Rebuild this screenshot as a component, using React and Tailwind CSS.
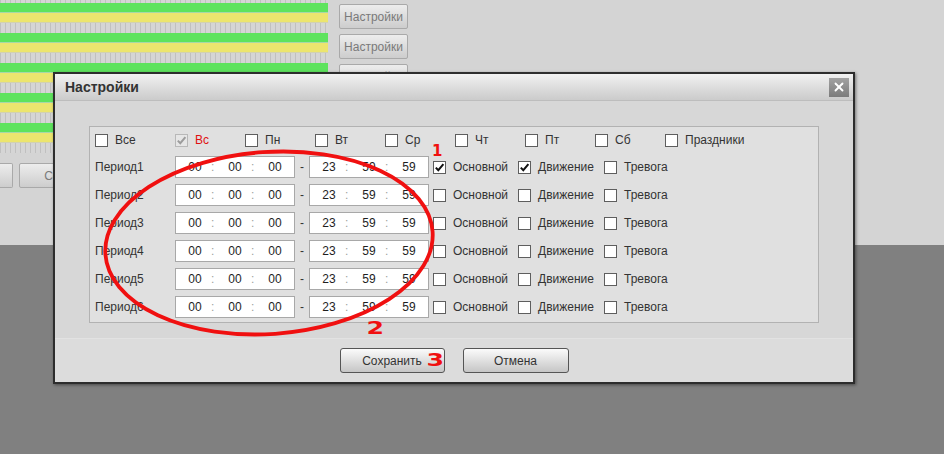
import React from 'react';
import clsx from 'clsx';
import { X } from 'lucide-react';

const days = ['Все', 'Вс', 'Пн', 'Вт', 'Ср', 'Чт', 'Пт', 'Сб', 'Праздники'];
const periods = [1, 2, 3, 4, 5, 6];

function Box({ checked, disabled }) {
  return (
    <span
      className={clsx(
        'flex h-[13px] w-[13px] shrink-0 items-center justify-center border',
        disabled ? 'border-[#b8b8b8] bg-[#e6e6e6] text-[#9c9c9c]' : 'border-[#5e5e5e] bg-white text-[#111]'
      )}
    >
      {checked && (
        <svg width="11" height="11" viewBox="0 0 11 11" fill="none">
          <path d="M1.8 5.6 4.3 8.2 9.4 2.2" stroke="currentColor" strokeWidth="2" />
        </svg>
      )}
    </span>
  );
}

function TimeBox({ parts }) {
  return (
    <div className="flex h-[22px] w-[120px] items-center border border-[#a8a8a8] bg-white pl-[4px] text-[#1e1e1e]">
      {parts.map((p, i) => (
        <React.Fragment key={i}>
          <span className="w-[30px] text-center">{p}</span>
          {i < 2 && <span className="w-[10px] pl-[1px] text-[#a0a0a0]">:</span>}
        </React.Fragment>
      ))}
    </div>
  );
}

function Schedule() {
  return (
    <div className="flex flex-col">
      <div className="h-[3px] w-[328px] bg-[repeating-linear-gradient(90deg,#c0c0c0_0px,#c0c0c0_1px,#d5d5d5_1px,#d5d5d5_5px)]" />
      {[0, 1, 2, 3, 4].map((i) => (
        <div key={i} className="flex h-[30px]">
          <div className="flex w-[328px] flex-col">
            <div className="h-[10px] border-b border-[#a8d8a8] bg-[#5ee35e]" />
            <div className="h-[10px] border-b border-[#d2d2b0] bg-[#ece56e]" />
            <div className="h-[10px] bg-[repeating-linear-gradient(90deg,#c0c0c0_0px,#c0c0c0_1px,#d5d5d5_1px,#d5d5d5_5px)]" />
          </div>
          <div className="ml-[11px] pt-[1px]">
            <button className="h-[25px] w-[69px] rounded-[2px] border border-[#a9a9a9] bg-gradient-to-b from-[#ededed] to-[#cdcdcd] text-[12px] text-[#7a7a7a]">
              Настройки
            </button>
          </div>
        </div>
      ))}
      <div className="mt-[10px] flex gap-[6px]">
        <div className="h-[25px] w-[13px] rounded-r-[2px] border-y border-r border-[#a9a9a9] bg-gradient-to-b from-[#ededed] to-[#cdcdcd]" />
        <button className="h-[25px] w-[110px] rounded-[2px] border border-[#a9a9a9] bg-gradient-to-b from-[#ededed] to-[#cdcdcd] text-[12px] text-[#7a7a7a]">
          Сохранить
        </button>
      </div>
    </div>
  );
}

function Dialog() {
  return (
    <div className="absolute left-[53px] top-[72px] flex h-[312px] w-[802px] flex-col border-2 border-[#2d2d2d] bg-[#d7d7d7] shadow-[1px_1px_3px_rgba(0,0,0,0.45)]">
      <div className="flex h-[27px] items-center justify-between border-b border-[#bdbdbd] bg-gradient-to-b from-[#f1f1f1] to-[#cbcbcb] pl-[10px] pr-[4px]">
        <span className="text-[14px] font-bold text-[#333]">Настройки</span>
        <button className="flex h-[19px] w-[20px] items-center justify-center bg-gradient-to-b from-[#a2a2a2] to-[#7c7c7c] text-white">
          <X size={14} strokeWidth={3.2} />
        </button>
      </div>

      <div className="h-[237px] pl-[34px] pt-[25px]">
        <div className="flex w-[730px] flex-col border border-[#b2b2b2] bg-[#e0e0e0] pb-[1px] pl-[5px] text-[#333]">
          <div className="flex h-[26px] items-center">
            {days.map((d, i) => (
              <div key={d} className={clsx('flex items-center gap-[7px]', i === 0 ? 'w-[80px]' : 'w-[70px]')}>
                <Box checked={i === 1} disabled={i === 1} />
                <span className={clsx(i === 1 && 'text-[#e01010]')}>{d}</span>
              </div>
            ))}
          </div>
          {periods.map((n) => (
            <div key={n} className="flex h-[28px] items-center">
              <span className="w-[80px]">Период{n}</span>
              <TimeBox parts={['00', '00', '00']} />
              <span className="w-[14px] text-center">-</span>
              <TimeBox parts={['23', '59', '59']} />
              <div className="ml-[4px] flex w-[85px] items-center gap-[7px]">
                <Box checked={n === 1} />
                <span>Основной</span>
              </div>
              <div className="flex w-[86px] items-center gap-[7px]">
                <Box checked={n === 1} />
                <span>Движение</span>
              </div>
              <div className="flex items-center gap-[7px]">
                <Box />
                <span>Тревога</span>
              </div>
            </div>
          ))}
        </div>
      </div>

      <div className="flex h-[44px] items-center justify-center gap-[18px] border-t border-[#e2e2e2] bg-[#dcdcdc]">
        <button className="h-[25px] w-[105px] rounded-[3px] border border-[#555] bg-gradient-to-b from-[#fbfbfb] to-[#c6c6c6] text-[12px] text-[#333]">
          Сохранить
        </button>
        <button className="h-[25px] w-[106px] rounded-[3px] border border-[#555] bg-gradient-to-b from-[#fbfbfb] to-[#c6c6c6] text-[12px] text-[#333]">
          Отмена
        </button>
      </div>
    </div>
  );
}

// hand-drawn red markup on top of the dialog
function Marks() {
  return (
    <>
      <svg className="pointer-events-none absolute left-0 top-0" width="944" height="454">
        <ellipse cx="269" cy="243" rx="164" ry="91" transform="rotate(-4 269 243)" fill="none" stroke="#f01010" strokeWidth="3.8" />
      </svg>
      <span className="absolute left-[432px] top-[144px] font-['DejaVu_Sans',sans-serif] text-[15px] font-bold leading-none text-[#f01010]">1</span>
      <span className="absolute left-[369px] top-[319px] scale-x-140 font-['DejaVu_Sans',sans-serif] text-[18px] font-bold leading-none text-[#f01010]">2</span>
      <span className="absolute left-[429px] top-[351px] scale-x-140 font-['DejaVu_Sans',sans-serif] text-[18px] font-bold leading-none text-[#f01010]">3</span>
    </>
  );
}

export default function App() {
  return (
    <div className="relative h-[454px] w-[944px] overflow-hidden bg-[#808080] font-['Liberation_Sans',Arial,sans-serif] text-[12px]">
      <div className="h-[245px] bg-[#d4d4d4]">
        <Schedule />
      </div>
      <Dialog />
      <Marks />
    </div>
  );
}
